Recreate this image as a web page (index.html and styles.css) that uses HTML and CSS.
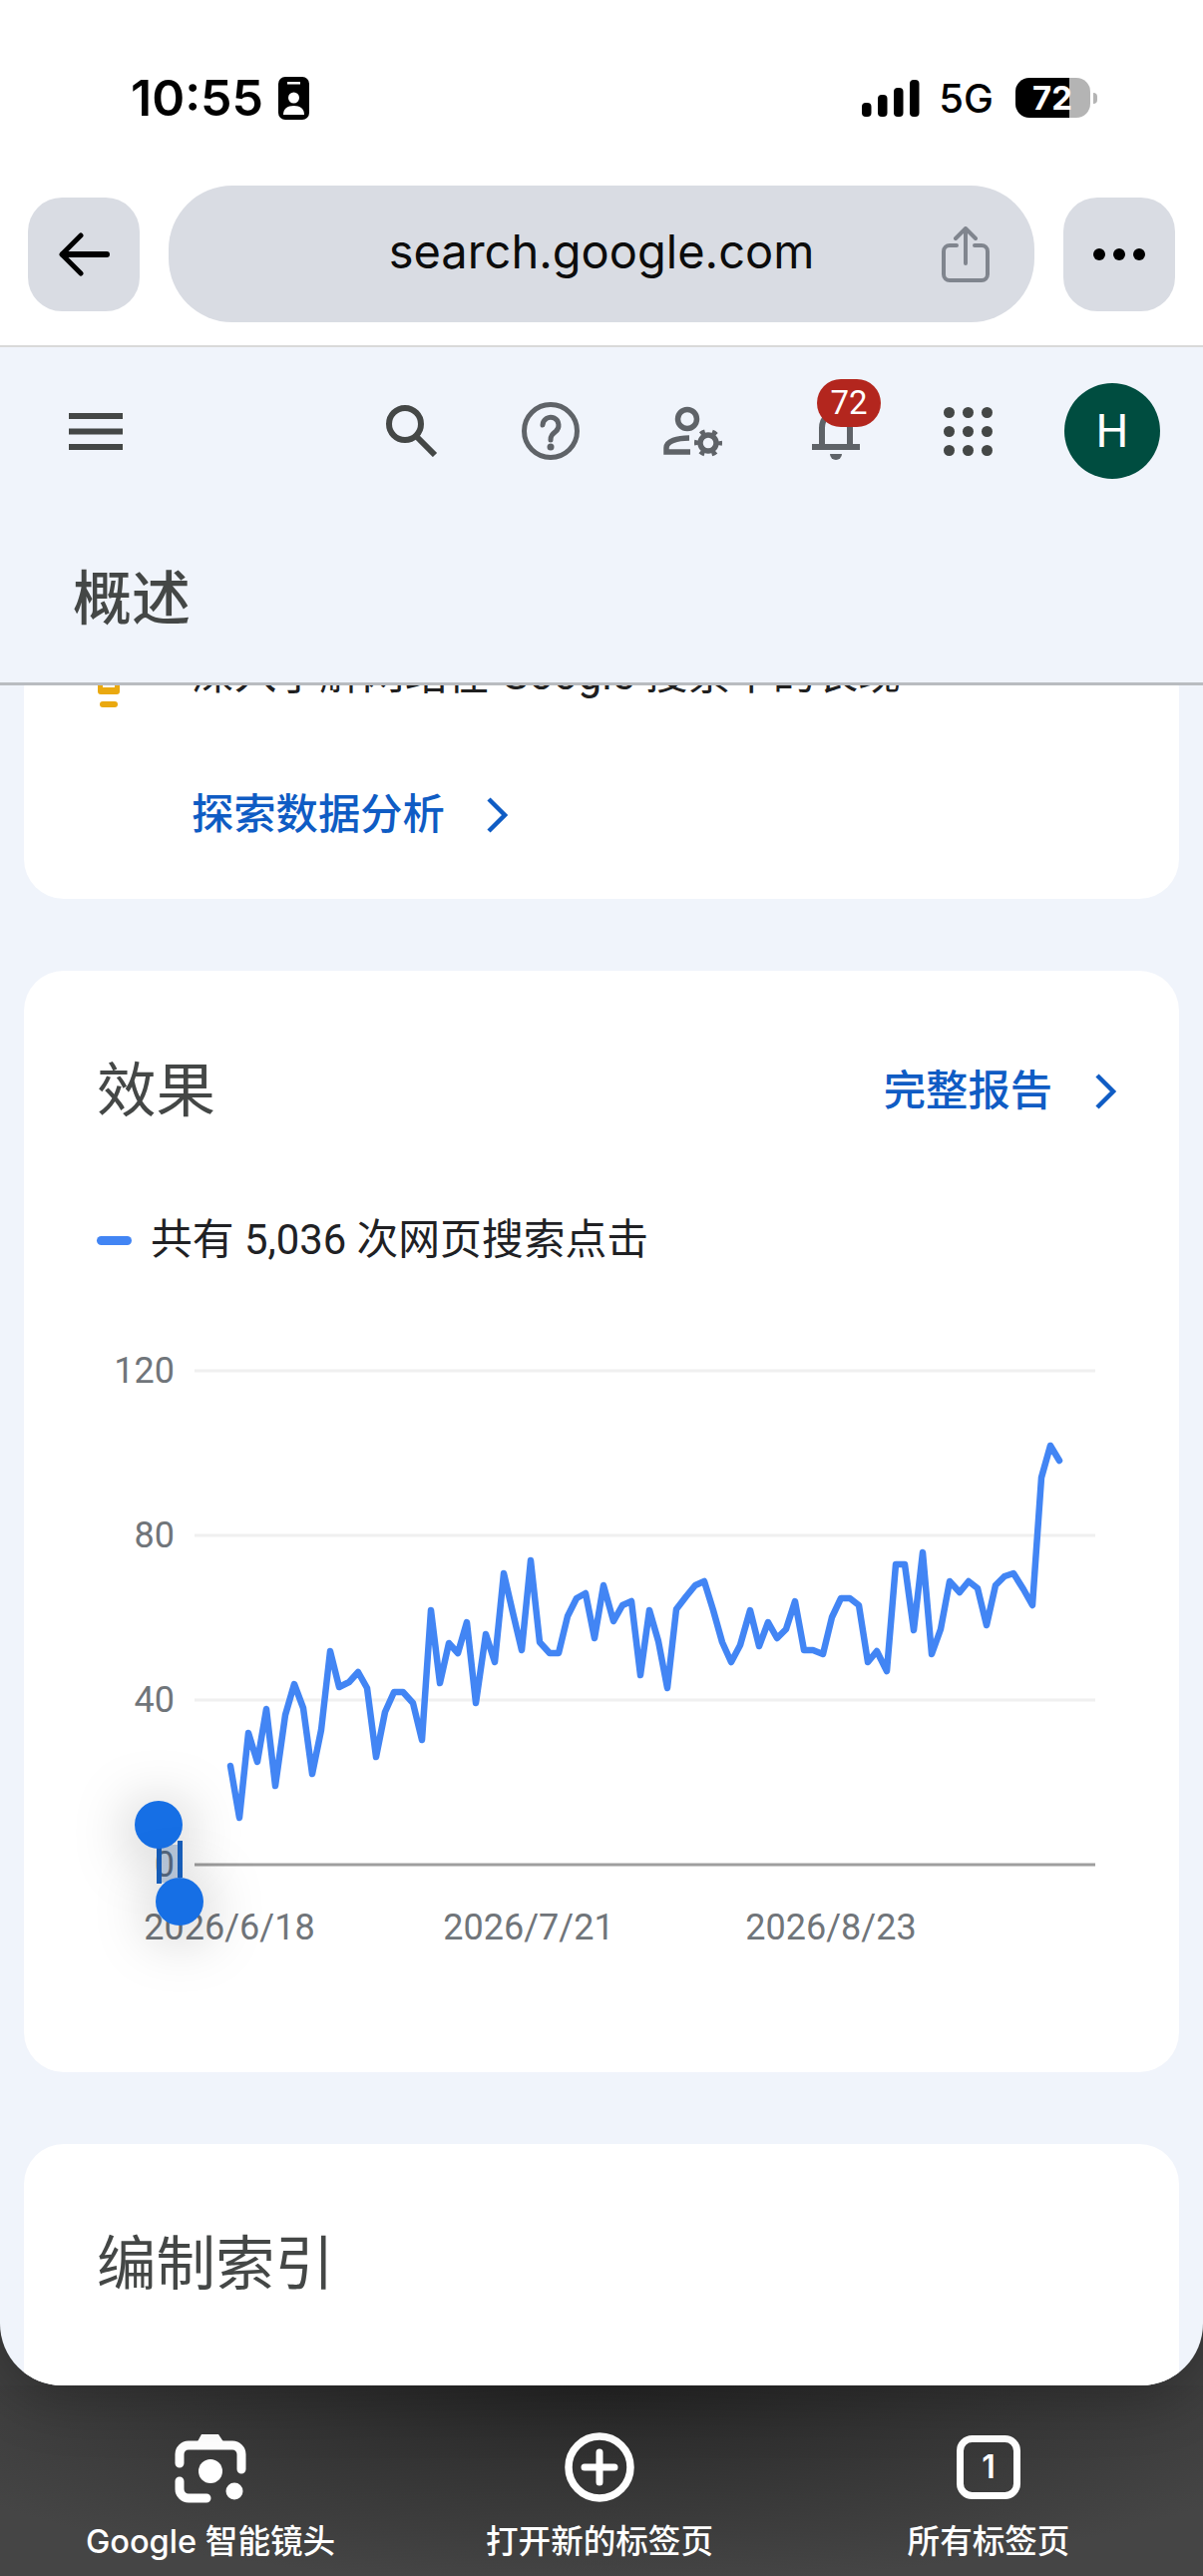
FILE: index.html
```html
<!DOCTYPE html>
<html>
    <head>
        <title>概述</title>
        <link rel="stylesheet" href="styles.css">
    </head>
    <body>
        <div class="top">
            <div class="status-bar">
                <div class="status-left">
                    <span class="time">10:55</span>
                    <svg class="id-icon" viewBox="0 0 31 43">
                        <rect width="31" height="43" rx="7" fill="#000"/>
                        <rect x="9" y="5" width="13" height="2.500" fill="#fff"/>
                        <circle cx="15.500" cy="21" r="5.500" fill="#fff"/>
                        <path d="M5 38c0-6 4-9 10.500-9s10.500 3 10.500 9z" fill="#fff"/>
                    </svg>
                </div>
                <div class="status-right">
                    <svg class="signal" viewBox="0 0 58 37">
                        <rect x="0" y="23" width="9.500" height="14" rx="4" fill="#000"/>
                        <rect x="16" y="15" width="9.500" height="22" rx="4" fill="#000"/>
                        <rect x="32" y="8" width="9.500" height="29" rx="4" fill="#000"/>
                        <rect x="48" y="0" width="9.500" height="37" rx="4" fill="#000"/>
                    </svg>
                    <span class="network">5G</span>
                    <span class="battery">72</span>
                    <span class="battery-nub"></span>
                </div>
            </div>
            <div class="browser-bar">
                <div class="round-btn">
                    <svg width="52" height="44" viewBox="0 0 52 44" fill="none" stroke="#000" stroke-linecap="round" stroke-linejoin="round">
                        <path d="M5 22H49" stroke-width="6"/>
                        <path d="M23 3L4 22L23 41" stroke-width="5"/>
                    </svg>
                </div>
                <div class="url-bar">
                    <span class="url-text">search.google.com</span>
                    <svg class="share" width="48" height="56" viewBox="0 0 48 56" fill="none" stroke="#80858e" stroke-width="4" stroke-linecap="round" stroke-linejoin="round">
                        <path d="M15 19H8a6 6 0 0 0-6 6v23a6 6 0 0 0 6 6h32a6 6 0 0 0 6-6V25a6 6 0 0 0-6-6h-7"/>
                        <path d="M24 37V3M14 12l10-10l10 10"/>
                    </svg>
                </div>
                <div class="round-btn">
                    <svg width="52" height="12" viewBox="0 0 52 12" fill="#000">
                        <circle cx="6" cy="6" r="6"/>
                        <circle cx="26" cy="6" r="6"/>
                        <circle cx="46" cy="6" r="6"/>
                    </svg>
                </div>
            </div>
        </div>

        <div class="webview">
            <div class="gsc-header">
                <div class="gsc-icons">
                    <svg width="54" height="37" viewBox="0 0 54 37" fill="#444746">
                        <rect width="54" height="6" y="0"/>
                        <rect width="54" height="6" y="15.500"/>
                        <rect width="54" height="6" y="31"/>
                    </svg>
                    <div class="gsc-actions">
                        <svg width="53" height="52" viewBox="0 0 53 52" fill="none" stroke="#444746" stroke-width="6">
                            <circle cx="20" cy="19" r="16"/>
                            <path d="M31 31L50 50"/>
                        </svg>
                        <svg width="58" height="60" viewBox="0 0 58 60" fill="none" stroke="#5f6368" stroke-width="5">
                            <circle cx="29" cy="30" r="26.500"/>
                            <path d="M21 24a8 8 0 1 1 13 6.500c-3 2.500-5 4-5 8.500" stroke-linecap="round"/>
                            <circle cx="29" cy="46" r="3.500" fill="#5f6368" stroke="none"/>
                        </svg>
                        <svg width="60" height="52" viewBox="26 26 60 52" fill="none" stroke="#5f6368">
                            <circle cx="50" cy="40" r="9.500" stroke-width="5.500"/>
                            <path d="M52 59C40 59 29 62 29 69V73H53" stroke-width="5.500"/>
                            <circle cx="71" cy="64" r="8" stroke-width="5.500"/>
                            <circle cx="71" cy="64" r="12" stroke-width="4" stroke-dasharray="5 7.570" stroke-dashoffset="2.500"/>
                        </svg>
                        <div class="bell">
                            <svg width="48" height="49" viewBox="0 0 48 49" fill="none">
                                <path d="M10 34V16C10 6 16 2 24 2S38 6 38 16V34" stroke="#5f6368" stroke-width="6"/>
                                <rect y="32" width="48" height="6" fill="#5f6368"/>
                                <path d="M18 42a6 6 0 0 0 12 0z" fill="#5f6368"/>
                            </svg>
                            <span class="badge">72</span>
                        </div>
                        <svg width="49" height="49" viewBox="0 0 49 49" fill="#444746">
                            <circle cx="5.500" cy="5.500" r="5.500"/><circle cx="24.500" cy="5.500" r="5.500"/><circle cx="43.500" cy="5.500" r="5.500"/>
                            <circle cx="5.500" cy="24.500" r="5.500"/><circle cx="24.500" cy="24.500" r="5.500"/><circle cx="43.500" cy="24.500" r="5.500"/>
                            <circle cx="5.500" cy="43.500" r="5.500"/><circle cx="24.500" cy="43.500" r="5.500"/><circle cx="43.500" cy="43.500" r="5.500"/>
                        </svg>
                        <div class="avatar">H</div>
                    </div>
                </div>
                <h1 class="page-title">概述</h1>
            </div>

            <div class="scroll">
                <div class="card card-insights">
                    <div class="insight-row">
                        <svg class="bulb" width="24" height="54" viewBox="0 0 24 54" fill="#eaa910">
                            <path d="M1 30H6V34H18V30H23V38a3 3 0 0 1-3 3H4a3 3 0 0 1-3-3z"/>
                            <rect x="3" y="48" width="18" height="6" rx="3"/>
                        </svg>
                        <span>深入了解网站在 Google 搜索中的表现</span>
                    </div>
                    <a class="link link-insights">探索数据分析
                        <svg width="22" height="36" viewBox="0 0 22 36" fill="none" stroke="#0f5cc4" stroke-width="4.500"><path d="M3 2L19 18L3 34"/></svg>
                    </a>
                </div>

                <div class="card card-performance">
                    <div class="card-head">
                        <h2 class="card-title">效果</h2>
                        <a class="link">完整报告
                            <svg width="24" height="36" viewBox="0 0 24 36" fill="none" stroke="#0f5cc4" stroke-width="4.500"><path d="M4 2L20 18L4 34"/></svg>
                        </a>
                    </div>
                    <div class="legend">
                        <span class="legend-mark"></span>
                        <span>共有 5,036 次网页搜索点击</span>
                    </div>
                    <div class="chart">
                        <svg width="1158" height="620" viewBox="24 1340 1158 620">
                            <g stroke="#f0f0f0" stroke-width="3">
                                <line x1="195" y1="1375" x2="1098" y2="1375"/>
                                <line x1="195" y1="1540" x2="1098" y2="1540"/>
                                <line x1="195" y1="1705" x2="1098" y2="1705"/>
                            </g>
                            <line x1="195" y1="1870" x2="1098" y2="1870" stroke="#9e9e9e" stroke-width="3"/>
                            <g class="axis-label" text-anchor="end">
                                <text x="175" y="1387">120</text>
                                <text x="175" y="1552">80</text>
                                <text x="175" y="1717">40</text>
                                <text x="175" y="1882">0</text>
                            </g>
                            <g class="axis-label" text-anchor="middle">
                                <text x="230" y="1945">2026/6/18</text>
                                <text x="530" y="1945">2026/7/21</text>
                                <text x="833" y="1945">2026/8/23</text>
                            </g>
                            <polyline fill="none" stroke="#4285f4" stroke-width="6.500" stroke-linecap="round" stroke-linejoin="round" points="231,1771 240,1823 249,1738 258,1767 267,1714 276,1791 286,1720 295,1689 304,1713 313,1779 322,1735 331,1656 340,1692 350,1687 359,1677 368,1693 377,1762 386,1717 395,1697 404,1697 414,1708 423,1745 432,1615 441,1688 450,1648 459,1658 468,1627 477,1708 487,1639 496,1667 505,1578 514,1617 523,1655 532,1565 541,1647 551,1658 560,1658 569,1621 578,1603 587,1598 596,1643 605,1590 615,1626 624,1610 633,1606 642,1680 651,1615 660,1646 669,1693 678,1614 688,1601 697,1590 706,1586 715,1615 724,1647 733,1667 742,1650 752,1615 761,1651 770,1627 779,1643 788,1634 797,1606 806,1655 815,1655 825,1659 834,1622 843,1603 852,1603 861,1610 870,1667 879,1656 889,1676 898,1569 907,1569 916,1635 925,1557 934,1659 943,1634 952,1586 962,1597 971,1586 980,1593 989,1630 998,1590 1007,1581 1016,1578 1026,1594 1035,1610 1044,1482 1053,1450 1062,1465"/>
                        </svg>
                        <span class="selection"></span>
                        <span class="sel-bar sel-bar-start"></span>
                        <span class="sel-bar sel-bar-end"></span>
                        <span class="sel-handle sel-handle-start"></span>
                        <span class="sel-handle sel-handle-end"></span>
                    </div>
                </div>

                <div class="card card-index">
                    <h2 class="card-title">编制索引</h2>
                </div>
            </div>
        </div>

        <div class="toolbar">
            <div class="tool">
                <div class="tool-icon">
                    <svg width="76" height="78" viewBox="24 14 76 78" fill="none" stroke="#fff" stroke-width="9" stroke-linecap="round">
                        <path d="M31 49V40a9 9 0 0 1 9-9H84a9 9 0 0 1 9 9V55"/>
                        <path d="M31 67V75a9 9 0 0 0 9 9H58"/>
                        <path d="M48 29L53 20H70L76 29z" fill="#fff" stroke="none"/>
                        <circle cx="62" cy="57" r="12" fill="#fff" stroke="none"/>
                        <circle cx="86" cy="77" r="8.500" fill="#fff" stroke="none"/>
                    </svg>
                </div>
                <span>Google 智能镜头</span>
            </div>
            <div class="tool">
                <div class="tool-icon">
                    <svg width="70" height="70" viewBox="0 0 70 70" fill="none" stroke="#fff">
                        <circle cx="35" cy="35" r="31" stroke-width="7.500"/>
                        <path d="M35 20V50M20 35H50" stroke-width="7" stroke-linecap="round"/>
                    </svg>
                </div>
                <span>打开新的标签页</span>
            </div>
            <div class="tool">
                <div class="tool-icon">
                    <svg width="64" height="64" viewBox="0 0 64 64" fill="none">
                        <rect x="3.500" y="3.500" width="57" height="57" rx="12" stroke="#fff" stroke-width="7"/>
                        <text class="tab-count" x="32" y="43" text-anchor="middle">1</text>
                    </svg>
                </div>
                <span>所有标签页</span>
            </div>
        </div>
    </body>
</html>
```

FILE: styles.css
```css
* {
    box-sizing: border-box;
}
body {
    margin: 0;
    width: 1206px;
    height: 2582px;
    overflow: hidden;
    display: flex;
    flex-direction: column;
    background-color: #404040;
    font-family: Roboto, "Noto Sans CJK SC", sans-serif;
}
svg {
    display: block;
    flex-shrink: 0;
}

/* phone + browser chrome */
.top {
    position: relative;
    z-index: 2;
    background: white;
    border-bottom: 2px solid #d9d9d9;
    padding-bottom: 23px;
}
.status-bar {
    height: 186px;
    padding: 10px 106px 0 131px;
    display: flex;
    justify-content: space-between;
    align-items: center;
    font-family: Inter, sans-serif;
    color: #000;
}
.status-left {
    display: flex;
    align-items: center;
    gap: 15px;
}
.time {
    font-size: 50px;
    font-weight: 600;
}
.id-icon {
    width: 31px;
    height: 43px;
}
.status-right {
    display: flex;
    align-items: center;
}
.signal {
    width: 58px;
    height: 37px;
    margin-right: 19px;
}
.network {
    font-size: 40px;
    font-weight: 500;
    margin-right: 22px;
}
.battery {
    width: 75px;
    height: 40px;
    padding-left: 17px;
    border-radius: 14px;
    background: linear-gradient(90deg, #000 72%, #b4b4b4 72%);
    color: white;
    font-size: 33px;
    font-weight: 700;
    line-height: 40px;
}
.battery-nub {
    width: 4px;
    height: 11px;
    margin-left: 3px;
    border-radius: 0 6px 6px 0;
    background-color: #b4b4b4;
}
.browser-bar {
    display: flex;
    align-items: center;
    gap: 29px;
    padding: 0 28px;
}
.round-btn {
    width: 112px;
    height: 114px;
    border-radius: 34px;
    background-color: #d9dce3;
    display: flex;
    justify-content: center;
    align-items: center;
}
.url-bar {
    flex: 1;
    height: 137px;
    border-radius: 64px;
    background-color: #d9dce3;
    display: grid;
    grid-template-columns: 1fr auto 1fr;
    align-items: center;
    padding-right: 45px;
    padding-left: 45px;
}
.url-text {
    grid-column: 2;
    margin-bottom: 7px;
    font-family: Inter, sans-serif;
    font-size: 47px;
    color: #0c0c0c;
}
.share {
    grid-column: 3;
    justify-self: end;
}

/* search console page */
.webview {
    position: relative;
    z-index: 1;
    flex: 1;
    min-height: 0;
    display: flex;
    flex-direction: column;
    overflow: hidden;
    background-color: #f0f4fb;
    border-radius: 0 0 62px 62px;
    box-shadow: 0 10px 60px rgba(0, 0, 0, 0.3);
}
.gsc-header {
    height: 339px;
    padding: 36px 43px 0 69px;
    border-bottom: 3px solid #b9bcc0;
    flex-shrink: 0;
}
.gsc-icons {
    display: flex;
    justify-content: space-between;
    align-items: center;
}
.gsc-actions {
    display: flex;
    align-items: center;
    gap: 84px;
}
.bell {
    position: relative;
    margin-left: 5px;
    padding-top: 10px;
}
.badge {
    position: absolute;
    left: 5px;
    top: -23px;
    width: 64px;
    height: 48px;
    border-radius: 24px;
    background-color: #b3261e;
    color: white;
    font-size: 33px;
    line-height: 48px;
    text-align: center;
}
.avatar {
    width: 96px;
    height: 96px;
    margin-left: -12px;
    border-radius: 50%;
    background-color: #004d40;
    color: white;
    font-size: 46px;
    line-height: 96px;
    text-align: center;
}
.page-title {
    margin: 81px 0 0 4px;
    font-size: 59px;
    font-weight: 500;
    line-height: 80px;
    color: #444746;
}
.scroll {
    flex: 1;
    min-height: 0;
    padding: 0 24px;
    display: flex;
    flex-direction: column;
    gap: 72px;
    overflow: hidden;
}
.card {
    background: white;
    border-radius: 40px;
    flex-shrink: 0;
}
.card-insights {
    margin-top: -35px;
    padding: 0 0 59px 73px;
}
.insight-row {
    display: flex;
    align-items: flex-start;
    gap: 71px;
    font-size: 42.700px;
    line-height: 48px;
    color: #1f1f1f;
}
.bulb {
    margin: 3px 0 -9px;
}
.link {
    display: flex;
    align-items: center;
    gap: 41px;
    font-size: 42.300px;
    font-weight: 500;
    line-height: 50px;
    color: #0f5cc4;
}
.link-insights {
    margin: 92px 0 0 95px;
}
.card-performance {
    height: 1104px;
}
.card-head {
    display: flex;
    justify-content: space-between;
    align-items: center;
    padding: 81px 62px 0 73px;
}
.card-title {
    margin: 0;
    font-size: 59.500px;
    font-weight: 400;
    line-height: 80px;
    color: #444746;
}
.legend {
    display: flex;
    align-items: center;
    gap: 19px;
    margin: 89px 0 0 73px;
    font-size: 41.800px;
    line-height: 40px;
    color: #202124;
}
.legend-mark {
    width: 35px;
    height: 9px;
    border-radius: 5px;
    background-color: #4285f4;
}
.chart {
    position: relative;
    margin-top: 76px;
}
.axis-label {
    font-family: Roboto, sans-serif;
    font-size: 36px;
    fill: #70757a;
}
.selection {
    position: absolute;
    left: 138px;
    top: 510px;
    width: 16px;
    height: 38px;
    background-color: rgba(26, 90, 170, 0.25);
}
.sel-bar {
    position: absolute;
    width: 5px;
    background-color: #1a66c9;
}
.sel-bar-start {
    left: 133px;
    top: 510px;
    height: 39px;
}
.sel-bar-end {
    left: 154px;
    top: 506px;
    height: 37px;
}
.sel-handle {
    position: absolute;
    width: 48px;
    height: 48px;
    border-radius: 50%;
    background-color: #166fe5;
    box-shadow: 0 8px 60px rgba(0, 0, 0, 0.35);
}
.sel-handle-start {
    left: 111px;
    top: 466px;
}
.sel-handle-end {
    left: 132px;
    top: 543px;
}
.card-index {
    height: 400px;
    padding: 81px 0 0 73px;
}

/* bottom browser toolbar */
.toolbar {
    height: 191px;
    flex-shrink: 0;
    padding: 43px 20px 0 16px;
    display: flex;
    background: radial-gradient(ellipse 760px 200px at 50% 0, #262626, #454545);
    font-family: Inter, "Noto Sans CJK SC", sans-serif;
    font-size: 32.600px;
    font-weight: 500;
    line-height: 40px;
    color: white;
}
.tool {
    width: 390px;
    display: flex;
    flex-direction: column;
    align-items: center;
    gap: 15px;
}
.tool-icon {
    height: 78px;
    display: flex;
    justify-content: center;
    align-items: center;
}
.tab-count {
    font-size: 32px;
    font-weight: 600;
    fill: white;
}
```
